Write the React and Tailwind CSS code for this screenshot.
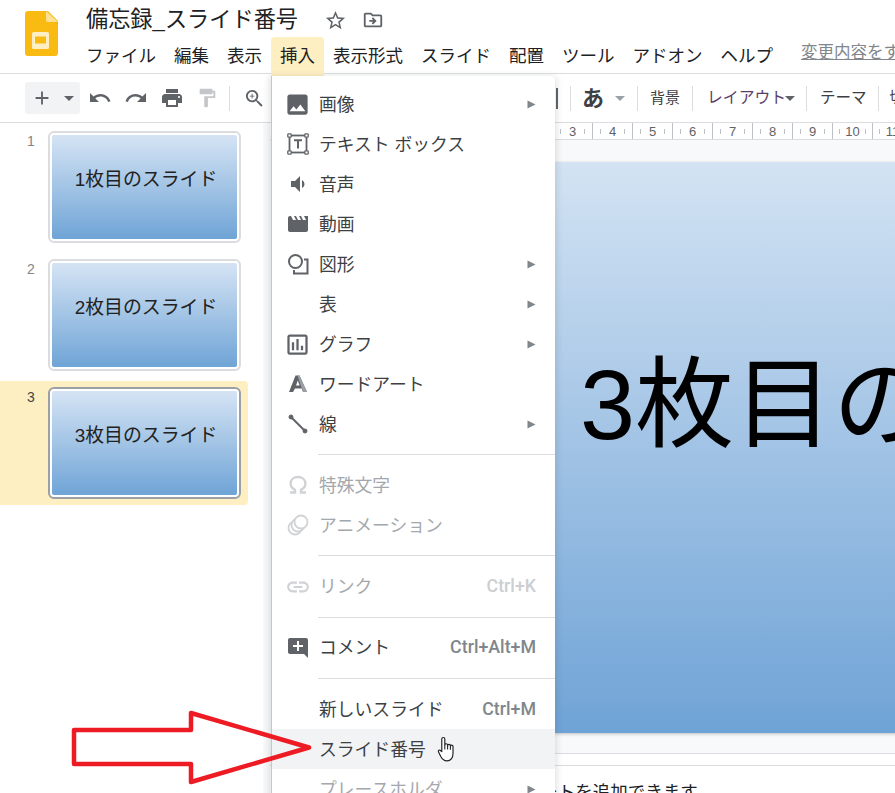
import React from 'react';
import {
  MdAdd, MdUndo, MdRedo, MdPrint, MdFormatPaint, MdZoomIn, MdPhoto, MdVolumeDown, MdMovie,
  MdOutlineInsertChart, MdLink, MdAddComment, MdStarBorder, MdOutlineDriveFileMove,
} from 'react-icons/md';

const JP = { fontFamily: '"Liberation Sans", "Noto Sans CJK JP", sans-serif' };

const menuBar = ['ファイル', '編集', '表示', '挿入', '表示形式', 'スライド', '配置', 'ツール', 'アドオン', 'ヘルプ'];
const slides = [1, 2, 3];
const rulerNumbers = [1, 2, 3, 4, 5, 6, 7, 8, 9, 10, 11];

function SlidesLogo() {
  return (
    <svg width="33" height="45" viewBox="0 0 33 45" className="shrink-0">
      <path d="M3 0h20l10 10v32a3 3 0 0 1-3 3H3a3 3 0 0 1-3-3V3a3 3 0 0 1 3-3z" fill="#f9bb12" />
      <path d="M21 0l12 11v3L21 4z" fill="#f0a80c" opacity="0.5" />
      <path d="M21 0l12 11H23a2 2 0 0 1-2-2z" fill="#fde293" />
      <rect x="7" y="21" width="17" height="17" rx="1.5" fill="#fdeec4" />
      <rect x="10" y="25.5" width="11" height="7" fill="#f9bb12" />
    </svg>
  );
}

function TextBoxIcon() {
  return (
    <svg width="22" height="22" viewBox="0 0 22 22" fill="none" stroke="#5f6368">
      <rect x="2.5" y="2.5" width="17" height="17" strokeWidth="1.8" />
      <rect x="0.8" y="0.8" width="3.4" height="3.4" rx="0.8" fill="#fff" strokeWidth="1.3" />
      <rect x="17.8" y="0.8" width="3.4" height="3.4" rx="0.8" fill="#fff" strokeWidth="1.3" />
      <rect x="0.8" y="17.8" width="3.4" height="3.4" rx="0.8" fill="#fff" strokeWidth="1.3" />
      <rect x="17.8" y="17.8" width="3.4" height="3.4" rx="0.8" fill="#fff" strokeWidth="1.3" />
      <path d="M7 7.2h8M11 7.2V15.5" strokeWidth="2" />
    </svg>
  );
}

function ShapeIcon() {
  return (
    <svg width="22" height="22" viewBox="0 0 22 22" fill="none" stroke="#5f6368" strokeWidth="2">
      <circle cx="8.5" cy="8.5" r="6.5" />
      <path d="M17 6.5h3.5V20.5H7V17" />
    </svg>
  );
}

function WordArtIcon() {
  return (
    <svg width="20" height="20" viewBox="0 0 20 20">
      <path d="M7.5 1.5h4L19 18h-4l-1.3-3.4H7L5 18H1z" fill="#5f6368" />
      <path d="M9.5 1.5h2L19 18h-4z" fill="#9aa0a6" />
      <path d="M8 11.5h3.6L9.8 6.5z" fill="#fff" />
    </svg>
  );
}

function LineIcon() {
  return (
    <svg width="20" height="20" viewBox="0 0 20 20" stroke="#5f6368" fill="#5f6368">
      <path d="M3 3l14 14" strokeWidth="2" />
      <circle cx="3" cy="3" r="2" />
      <circle cx="17" cy="17" r="2" />
    </svg>
  );
}

function OmegaIcon() {
  return (
    <svg width="20" height="20" viewBox="0 0 20 20" fill="none" stroke="#d0d2d5" strokeWidth="2.4">
      <path d="M2 17.5h5v-2.6C4 13.5 2.6 11 2.6 8.6 2.6 4.6 5.8 2 10 2s7.400 2.600 7.400 6.600c0 2.400-1.400 4.900-4.400 6.300v2.600h5" />
    </svg>
  );
}

function AnimationIcon() {
  return (
    <svg width="22" height="22" viewBox="0 0 22 22" fill="#fff" stroke="#d0d2d5" strokeWidth="1.8">
      <circle cx="8" cy="14" r="6.500" />
      <circle cx="11" cy="11" r="6.500" />
      <circle cx="14" cy="8" r="6.500" />
    </svg>
  );
}

function HandCursor() {
  return (
    <svg width="21" height="27" viewBox="0 0 19 25" className="shrink-0">
      <path
        d="M4.200 14.500V2.800a1.400 1.400 0 0 1 2.800 0V8.500a1.300 1.300 0 0 1 2.600 0v.5a1.300 1.300 0 0 1 2.600 0v.7a1.200 1.200 0 0 1 2.400 0V16c0 4.200-2.200 7-5.600 7-3 0-4.400-1.600-5.600-3.800L1.200 14.800c-.7-1.300 1-2.400 2-1.200z"
        fill="#fff"
        stroke="#222"
        strokeWidth="1.100"
        strokeLinejoin="round"
      />
      <path d="M7 8.500v4M9.600 9v3.500M12.200 9.700v3" stroke="#222" strokeWidth="1" fill="none" />
    </svg>
  );
}

function SubArrow() {
  return (
    <svg width="9" height="9" viewBox="0 0 9 9">
      <path d="M0.500 0.500L8.500 4.500L0.500 8.500z" fill="#80868b" />
    </svg>
  );
}

function Caret({ color = '#5f6368' }) {
  return (
    <svg width="10" height="5" viewBox="0 0 10 5">
      <path d="M0 0h10L5 5z" fill={color} />
    </svg>
  );
}

function MenuRow({ icon, label, shortcut, sub, disabled, active }) {
  return (
    <div className={`flex h-10 shrink-0 items-center pr-[19px] ${active ? 'bg-[#f1f3f4]' : ''}`}>
      <div className="flex w-[47px] shrink-0 justify-center pl-[4px]">{icon}</div>
      <span className={`mt-[2px] text-[17.8px] whitespace-nowrap ${disabled ? 'text-[#a4a8ad]' : 'text-[#3c4043]'} ${active ? 'mr-[11px]' : ''}`}>{label}</span>
      {active && <HandCursor />}
      <div className="flex-1" />
      {shortcut && (
        <span
          className={`text-[17.8px] font-medium ${disabled ? 'text-[#ccced1]' : 'text-[#80868b]'}`}
          style={{ fontFamily: 'Roboto, sans-serif' }}
        >
          {shortcut}
        </span>
      )}
      {sub && <SubArrow />}
    </div>
  );
}

function MenuSep() {
  return (
    <div className="flex h-[21.25px] shrink-0 items-center pl-[46px]">
      <div className="h-px w-full bg-[#dadce0]" />
    </div>
  );
}

function ToolbarSep({ className = '' }) {
  return <div className={`h-[25px] w-px shrink-0 bg-[#dadce0] ${className}`} />;
}

export default function App() {
  return (
    <div className="relative flex h-[793px] w-[895px] flex-col overflow-hidden bg-white text-[#202124]" style={JP}>
      {/* title and menu bar */}
      <header className="flex h-[74px] shrink-0 border-b border-[#dadce0] pl-[25px] pt-[11px]">
        <SlidesLogo />
        <div className="ml-[19px] flex min-w-0 flex-1 flex-col">
          <div className="flex h-[26px] -mt-[4px] items-center pl-[9px]">
            <span className="text-[22.2px] whitespace-nowrap text-[#202124]">備忘録_スライド番号</span>
            <MdStarBorder size={23} className="ml-[26px] text-[#5f6368]" />
            <MdOutlineDriveFileMove size={22} className="ml-[15px] text-[#5f6368]" />
          </div>
          <div className="mt-[4px] flex items-start whitespace-nowrap">
            {menuBar.map((name) => (
              <div
                key={name}
                className={`flex h-[39px] items-center rounded-t-[4px] px-[9px] text-[17.5px] ${name === '挿入' ? 'bg-[#feefc3]' : ''}`}
              >
                {name}
              </div>
            ))}
            <span className="ml-[19px] mt-[3px] text-[16.5px] text-[#80868b] underline">変更内容をすべて</span>
          </div>
        </div>
      </header>

      {/* toolbar */}
      <div className="flex h-[49px] shrink-0 items-center overflow-hidden border-b border-[#dadce0] pl-[25px] text-[#5f6368]">
        <div className="flex h-[32px] w-[55px] shrink-0 items-center rounded-[3px] bg-[#f1f3f4]">
          <MdAdd size={22} className="ml-[6px]" />
          <div className="ml-[11px]"><Caret /></div>
        </div>
        <div className="ml-[2px] flex w-[36px] shrink-0 justify-center"><MdUndo size={24} /></div>
        <div className="flex w-[36px] shrink-0 justify-center"><MdRedo size={24} /></div>
        <div className="flex w-[35px] shrink-0 justify-center"><MdPrint size={24} /></div>
        <div className="flex w-[36px] shrink-0 justify-center"><MdFormatPaint size={22} className="text-[#c4c6c9]" /></div>
        <ToolbarSep className="ml-[4px]" />
        <div className="ml-[6px] flex w-[36px] shrink-0 justify-center"><MdZoomIn size={23} /></div>
        <div className="ml-[284px] h-[21px] w-[2px] shrink-0 bg-[#5f6368]" />
        <ToolbarSep className="ml-[12px]" />
        <span className="ml-[11px] text-[22px] font-bold text-[#3c4043]">あ</span>
        <div className="ml-[11px]"><Caret color="#9aa0a6" /></div>
        <ToolbarSep className="ml-[12px]" />
        <span className="ml-[12px] text-[15px] whitespace-nowrap text-[#3c4043]">背景</span>
        <ToolbarSep className="ml-[12px]" />
        <span className="ml-[14px] text-[15.8px] whitespace-nowrap text-[#5b3f6a]">レイアウト</span>
        <div className="ml-[-1px]"><Caret /></div>
        <ToolbarSep className="ml-[11px]" />
        <span className="ml-[13px] text-[15.5px] whitespace-nowrap text-[#3c4043]">テーマ</span>
        <ToolbarSep className="ml-[11px]" />
        <span className="ml-[11px] text-[14.5px] whitespace-nowrap text-[#3c4043]">切り替え効果</span>
      </div>

      <div className="flex min-h-0 flex-1">
        {/* filmstrip */}
        <aside className="flex w-[263px] shrink-0 flex-col gap-[4px] pt-[2px]">
          {slides.map((n) => (
            <div
              key={n}
              className={`flex h-[124px] w-[248px] shrink-0 items-center rounded-r-[4px] pl-[48px] ${n === 3 ? 'bg-[#feefc3]' : ''}`}
            >
              <span className={`mb-[91px] -ml-[21px] w-[21px] text-[14px] ${n === 3 ? 'text-[#444]' : 'text-[#80868b]'}`}>{n}</span>
              <div className={`flex h-[112px] w-[193px] rounded-[6px] border-[2px] bg-white p-[2px] ${n === 3 ? 'border-[#9aa0a6]' : 'border-[#dadce0]'}`}>
                <div className="flex flex-1 items-center justify-center rounded-[2px] bg-gradient-to-b from-[#d5e4f4] to-[#6fa4d6] pb-[14px] pl-[3px] text-[18.9px] text-[#222]">
                  {n}枚目のスライド
                </div>
              </div>
            </div>
          ))}
        </aside>
        <div className="w-[7px] shrink-0 bg-[#f8f9fa]" />

        {/* editor */}
        <main className="flex min-w-0 flex-1 flex-col overflow-hidden">
          <div className="flex h-[17px] shrink-0 border-b border-[#dadce0] pl-[203px]">
            {rulerNumbers.map((n) => (
              <div key={n} className="flex h-[16px] w-[40px] shrink-0 items-center justify-evenly border-r border-[#bdc1c6] text-[13px] leading-none text-[#5f6368]">
                <span className="h-[5px] w-px bg-[#bdc1c6]" />
                <span>{n}</span>
                <span className="h-[5px] w-px bg-[#bdc1c6]" />
              </div>
            ))}
          </div>
          <div className="h-[614px] shrink-0 overflow-hidden border-b border-[#dadce0] bg-[#f8f9fa] pl-[20px] pt-[22px]">
            <div className="h-[571px] w-[760px] bg-gradient-to-b from-[#d3e3f3] to-[#6fa3d6] pl-[290px] pt-[193px] shadow-[0_1px_3px_rgba(60,64,67,0.3)]">
              <span className="block text-[99px] leading-[100px] whitespace-nowrap text-black">3枚目のスライド</span>
            </div>
          </div>
          <div className="h-[12px] shrink-0 border-b border-[#dadce0]" />
          <div className="pl-[38px] pt-[13px] text-[17.5px] whitespace-nowrap text-[#202124]">
            クリックするとスピーカー ノートを追加できます
          </div>
        </main>
      </div>

      {/* insert menu, open over the page */}
      <div className="absolute left-[271px] top-[76px] flex h-[740px] w-[284px] flex-col rounded-tr-[4px] border-l border-[#c4c6c9] bg-white pt-[8px] shadow-[0_2px_6px_2px_rgba(60,64,67,0.15)]">
        <MenuRow icon={<MdPhoto size={27} className="text-[#5f6368]" />} label="画像" sub />
        <MenuRow icon={<TextBoxIcon />} label="テキスト ボックス" />
        <MenuRow icon={<MdVolumeDown size={24} className="text-[#5f6368]" />} label="音声" />
        <MenuRow icon={<MdMovie size={24} className="text-[#5f6368]" />} label="動画" />
        <MenuRow icon={<ShapeIcon />} label="図形" sub />
        <MenuRow label="表" sub />
        <MenuRow icon={<MdOutlineInsertChart size={27} className="text-[#5f6368]" />} label="グラフ" sub />
        <MenuRow icon={<WordArtIcon />} label="ワードアート" />
        <MenuRow icon={<LineIcon />} label="線" sub />
        <MenuSep />
        <MenuRow icon={<OmegaIcon />} label="特殊文字" disabled />
        <MenuRow icon={<AnimationIcon />} label="アニメーション" disabled />
        <MenuSep />
        <MenuRow icon={<MdLink size={26} className="text-[#d0d2d5]" />} label="リンク" shortcut="Ctrl+K" disabled />
        <MenuSep />
        <MenuRow icon={<MdAddComment size={24} className="text-[#5f6368]" />} label="コメント" shortcut="Ctrl+Alt+M" />
        <MenuSep />
        <MenuRow label="新しいスライド" shortcut="Ctrl+M" />
        <MenuRow label="スライド番号" active />
        <MenuRow label="プレースホルダ" sub disabled />
      </div>

      {/* red annotation arrow */}
      <svg className="absolute left-[68px] top-[706px]" width="250" height="84" viewBox="0 0 250 84" fill="none">
        <path d="M6 24H123V7L241 41.500L123 76V58H6z" stroke="#ed1c24" strokeWidth="4.500" strokeLinejoin="round" />
      </svg>
    </div>
  );
}
